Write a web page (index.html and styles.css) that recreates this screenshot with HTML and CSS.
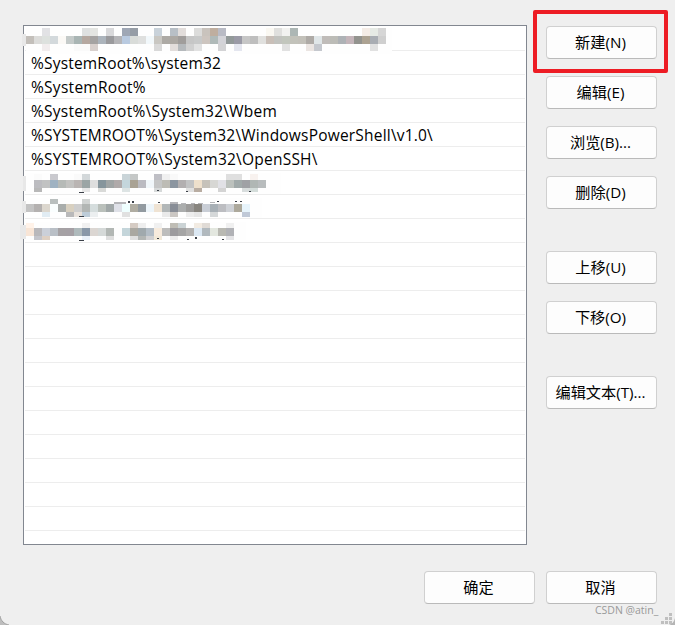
FILE: index.html
```
<!DOCTYPE html>
<html lang="zh-CN">
<head>
<meta charset="utf-8">
<title>编辑环境变量</title>
<link rel="stylesheet" href="styles.css">
</head>
<body>
<main class="dialog">
  <div class="content">
    <ul class="paths">
      <li class="row masked" data-mask="first"></li>
      <li class="row"><span class="p1">%SystemRoot%\system32</span></li>
      <li class="row"><span class="p2">%SystemRoot%</span></li>
      <li class="row"><span class="p3">%SystemRoot%\System32\Wbem</span></li>
      <li class="row"><span class="p4">%SYSTEMROOT%\System32\WindowsPowerShell\v1.0\</span></li>
      <li class="row"><span class="p5">%SYSTEMROOT%\System32\OpenSSH\</span></li>
      <li class="row masked" data-mask="second"></li>
      <li class="row masked" data-mask="third"></li>
      <li class="row masked" data-mask="fourth"></li>
      <li class="row"></li><li class="row"></li><li class="row"></li><li class="row"></li>
      <li class="row"></li><li class="row"></li><li class="row"></li><li class="row"></li>
      <li class="row"></li><li class="row"></li><li class="row"></li><li class="row"></li>
    </ul>
    <div class="actions">
      <button class="highlight">新建(N)</button>
      <button>编辑(E)</button>
      <button>浏览(B)...</button>
      <button>删除(D)</button>
      <button class="gap">上移(U)</button>
      <button>下移(O)</button>
      <button class="gap">编辑文本(T)...</button>
    </div>
  </div>
  <footer class="footer">
    <button>确定</button>
    <button>取消</button>
  </footer>
  <svg class="corner" width="9" height="9"><path d="M0 0C1 5 4 8 9 9H0Z" fill="#bdbdbd"/><path d="M0 0C1 5 4 8 9 9" fill="none" stroke="#a0a0a0"/></svg>
  <span class="watermark">CSDN @atin_</span>
  <svg class="grip" width="14" height="12" fill="#bfbfbf"><path d="M8 0h3v3H8zM4 4h3v3H4zM8 4h3v3H8zM0 8h3v3H0zM4 8h3v3H4zM8 8h3v3H8z"/><path d="M14 5C13 9 11 11 8 12H14Z" fill="#b5b5b5"/></svg>
</main>
<script src="mask.js"></script>
</body>
</html>
```
FILE: styles.css
```
*, *::after { box-sizing: border-box; }
body { margin: 0; background: #efefef; font-family: "Open Sans", "Noto Sans CJK SC", sans-serif; color: #000; }
.dialog { position: relative; width: 675px; height: 625px; padding: 25px 18px 0 23px; overflow: hidden; }
.content { display: flex; gap: 19px; }
.paths { width: 504px; height: 520px; margin: 0; padding: 0 1px; list-style: none; background: #fff; border: 1px solid #828790; }
.row { position: relative; height: 24px; border-bottom: 1px solid #ededed; padding-left: 6px; font-size: 15.5px; line-height: 24px; white-space: pre; }
.row:first-child { height: 25px; }
.row span { display: inline-block; }
.p1 { letter-spacing: 0.19px; }
.p2 { letter-spacing: 0.28px; }
.p3 { letter-spacing: 0.24px; }
.p4 { letter-spacing: 0.2px; }
.p5 { letter-spacing: 0.23px; }
.mask { position: absolute; left: -4px; top: 0; overflow: visible; }
.actions { display: flex; flex-direction: column; gap: 17px; padding-top: 1px; }
button { position: relative; width: 111px; height: 33px; flex: none; padding: 0 2px 1px 0; border: 1px solid #d0d0d0; border-bottom-color: #bababa; border-radius: 4px; background: #fdfdfd; color: #000; font: 15.2px/28px "Open Sans", "Noto Sans CJK SC", sans-serif; white-space: nowrap; }
.gap { margin-top: 25px; }
.highlight::after { content: ""; position: absolute; left: -14px; top: -17px; width: 135px; height: 63px; border: 4px solid #ed1c24; border-radius: 2px; }
.footer { display: flex; justify-content: flex-end; gap: 11px; margin-top: 26px; }
.corner { position: absolute; left: 0; bottom: 0; }
.watermark { position: absolute; left: 595px; top: 603px; font: 10.5px/14px "Open Sans", sans-serif; color: #999; white-space: nowrap; }
.grip { position: absolute; right: 0; bottom: 0; }
```
FILE: mask.js
```
// Each mask is a run of 8px blocks: [x, y, height, colours], "-" leaves a block empty.
const masks = {
  first: { top: 26, back: [[22, 34, 11, 12], [26, 28, 366, 26]], runs: [
    [26, 28, 8, "- - e2e2e5 - - - - dfe1e1 e4e5e2 - d9d9db - 9fa7b5 969da6 - - c9d2da - b8bfc6 e2dddb - dcdcdb c9c3bd bfae9f b9bbc5 - - - - - faf8f2 e0e0de f2f2f0 adb7b5 - - - - - - - - f4ece6 e6eae5 d6d6d6"],
    [26, 36, 8, "c3bfba dcdcda dde1de d3d9dc fbf9f6 c4cac9 a9b5b4 b5a8a0 a5a3a2 acb4bc 9a9a9d b5b5b8 b9cae0 d9dcd9 dfe0df f2f8fb c9c7c2 adaaa5 aca8a3 a09d9b c6c6c6 c8c9c9 cdc5bf b0bab9 d3d3d8 929999 9a9aa6 c6c6c6 bebebe e0e0de c9bfb8 c2c3bf c2c6bd c2c2ba c2c0b9 aeaaa6 e0e6e8 c0bcb9 bcbcb7 aeb2b6 c4b5ba 93938e aca292 a9adb3 cfcfcf"],
    [26, 44, 7, "- - f2edee - - - fafafa fafafa d8d0cd - - - - - - - d9d9d9 - e2dddb b5b9bc d0d0d0 e1e1e1 - - d3d3d5 - e4e6ef - - - - - e1e1e1 - - ebe5e2 c5c8ce - - - - - - e1e1e1"]
  ], ink: [] },
  second: { top: 171, back: [[23, 176, 3, 15], [26, 173, 255, 21]], runs: [
    [34, 174, 6, "fbfbfb - c9c9ce - - fafafa d3d8da - - - - c9d4d8 c5c8c7 - - bfbfc5 f0f0f0 f9f9f9 - - - - - - dfdfdf dfdfdf - f8f2ef"],
    [34, 180, 8, "bcbcc0 c1c2c2 9fb2c2 b6bab7 c3c3c1 bab5b3 9ba5a5 dedede 86959c a0a5a5 b0aaaa c4d6dc a9a294 bbbbc1 f1f7fa c5c6c6 bdbcb5 8b95a0 b2afb0 c2c3c4 eee0cc c6c2ba d7d7d4 e1e1e6 bcc1bd a1aaaa 9fa1a5 b0b7b4 b8bcbd"],
    [34, 188, 4, "b8b8b8 - - - - - e7e7e7 - d9dad8 - - dde4e4 - - - d6d9d9 - - - e0e0e0 b9ada2 - - d4d4d4 - - d8dddd d4ddda"]
  ], ink: [[79, 192, 5, 1], [157, 190, 2, 1], [186, 191, 2, 1], [249, 191, 2, 1]] },
  third: { top: 195, back: [[22, 201, 4, 12], [26, 198, 236, 20]], runs: [
    [34, 199, 5, "- - b9bfbe - - - d1d4d3"],
    [26, 204, 8, "c3c3c3 b4b1b0 dcd7ce fafefe a9adab d8d0c0 cecece b2b6b4 d5dddd bac0bb a1a8a8 dfe1e8 efffff b0ada2 929aa0 edf5fa efe3d3 b2b7b8 888d96 abadad 9c9b9a 88857f c9ced6 a8b0b6 bcbdc1 ced1d6 ada99c e7f4fb"],
    [26, 212, 5, "- - e1ecf3 - - b9b9ba e8e2dc bdccd8 eceff0 - - - e1e1e1 - - - - eaeaea cbc7c3 - ededed e6e6e6 - d5d8d9 - - - c0c9d7"]
  ], ink: [[79, 216, 5, 1], [128, 201, 2, 2], [132, 201, 2, 2], [158, 202, 2, 1], [217, 201, 2, 1], [235, 201, 2, 1], [240, 201, 2, 1]],
     soft: [[114, 202, 12, 2], [170, 202, 8, 2], [181, 203, 5, 1], [191, 203, 4, 1], [198, 203, 5, 1], [210, 202, 5, 1]] },
  fourth: { top: 219, back: [[20, 225, 6, 14], [26, 222, 220, 18]], runs: [
    [26, 223, 5, "fff2e8 - - - - - - f1f1f1 - - - - - d5cbc3 eeeeee - f0f0f0 - bfbdb5 cbd3d5 - f2ebe2 e0dbd6 - - f0f0f0"],
    [26, 228, 8, "f8e5d6 b9b8bb cbd0d9 b9bfc6 a5a1a4 a5a0a5 afbabc 8998a8 dbd6d2 d5d9d8 b2b7b4 fdfdfd c4d5da aaa8a1 a0a9ad b3bdc6 f7ebdd bdbdbc 9c9b9e a5a5a5 b3b2b1 dce8f3 b1b9be e3e7df b9b9b2 b1b2b6"],
    [26, 236, 4, "- c4c5cb ded0c3 - - - - eaf2f9 - - dedede - - e0e0e0 b3b6b4 d0d0d2 f2e9d8 - ededed - - - - - - e4e4e6"]
  ], ink: [[79, 240, 5, 1], [157, 238, 2, 1], [187, 239, 2, 1], [195, 237, 2, 2], [222, 239, 2, 1]] }
};

const NS = "http://www.w3.org/2000/svg";
function block(svg, x, y, w, h, fill) {
  const r = document.createElementNS(NS, "rect");
  Object.entries({ x, y, width: w, height: h, fill }).forEach(([k, v]) => r.setAttribute(k, v));
  svg.append(r);
}
document.querySelectorAll(".masked").forEach(row => {
  const m = masks[row.dataset.mask];
  const svg = document.createElementNS(NS, "svg");
  svg.setAttribute("class", "mask");
  svg.setAttribute("width", 380);
  svg.setAttribute("height", 24);
  svg.setAttribute("viewBox", `21 ${m.top} 380 24`);
  m.back.forEach(([x, y, w, h], i) => block(svg, x, y, w, h, i ? "#fefefe" : "#e8e8e8"));
  m.runs.forEach(([x, y, h, cells]) => cells.split(" ").forEach((c, i) => {
    if (c !== "-") block(svg, x + i * 8, y, 8, h, "#" + c);
  }));
  m.ink.forEach(([x, y, w, h]) => block(svg, x, y, w, h, "#3b4048"));
  (m.soft || []).forEach(([x, y, w, h]) => block(svg, x, y, w, h, "#b5b5b8"));
  row.append(svg);
});
```
